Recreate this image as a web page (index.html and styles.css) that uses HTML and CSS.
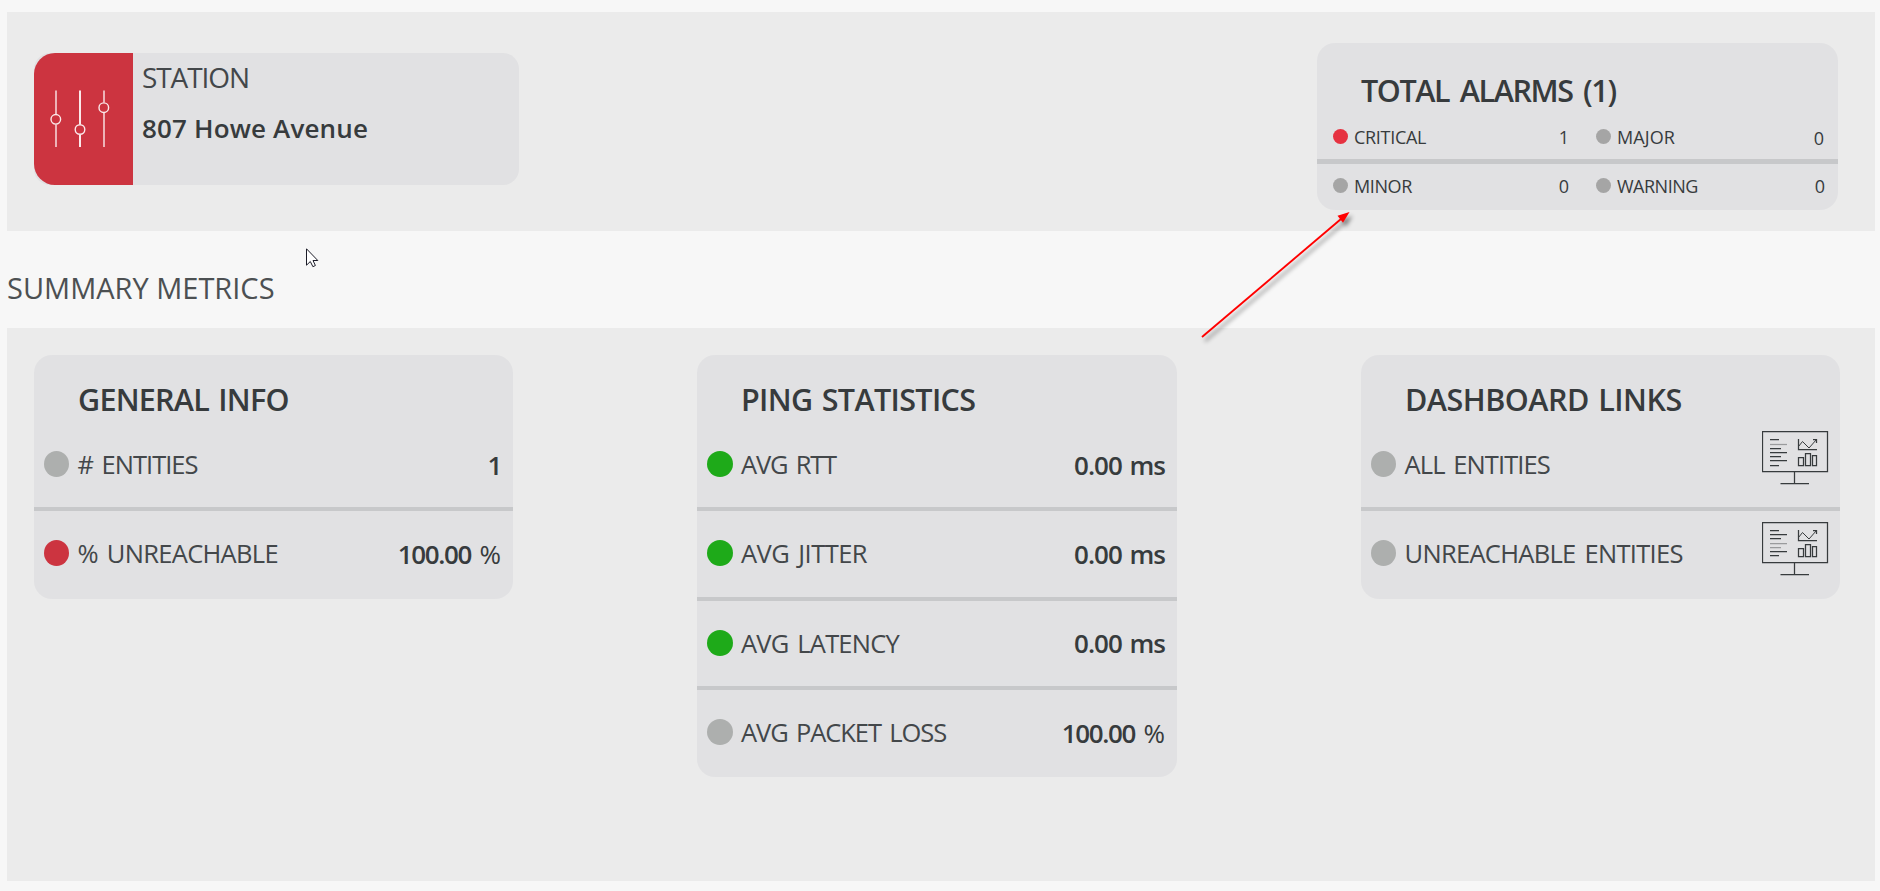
FILE: index.html
```html
<!DOCTYPE html>
<html lang="en">
<head>
<meta charset="utf-8">
<title>Station overview</title>
<link rel="stylesheet" href="styles.css">
</head>
<body>
<svg class="defs" width="0" height="0" aria-hidden="true">
  <symbol id="monitor" viewBox="0 0 67 54">
    <path d="M.5 .5h65v40H.5zM32.5 41v11M18.5 52.5H47"/>
    <path d="M36.5 8v10.5H55"/>
    <path stroke-width="1" d="M36.5 15.5l4-5 6.5 6.500 7.500-8.500"/>
    <path d="M51 8.500h3.500V12"/>
    <path d="M36.500 26.500h5v8h-5zM43.500 22.500h5v12h-5zM50.500 24.500h4v10h-4z"/>
  </symbol>
</svg>

<header class="panel top">
  <section class="station">
    <div class="station-icon">
      <svg width="60" height="58" viewBox="0 0 60 58">
        <path d="M6 .5v24M6 34.500V57M54 .5v12M54 23v34"/>
        <path class="thick" d="M30 .5v34M30 45v12"/>
        <circle cx="5.800" cy="29.300" r="4.800"/><circle cx="30" cy="39.500" r="4.800"/><circle cx="53.800" cy="17.700" r="4.800"/>
      </svg>
    </div>
    <div class="station-text">
      <div class="station-label">STATION</div>
      <div class="station-name">807 Howe Avenue</div>
    </div>
  </section>

  <section class="alarms">
    <h2 class="alarms-title">TOTAL ALARMS (1)</h2>
    <div class="alarm-row">
      <div class="alarm"><i class="sdot critical"></i><span class="al-critical">CRITICAL</span><b>1</b></div>
      <div class="alarm"><i class="sdot"></i><span class="al-major">MAJOR</span><b class="low">0</b></div>
    </div>
    <div class="alarm-row second">
      <div class="alarm"><i class="sdot"></i><span class="al-minor">MINOR</span><b>0</b></div>
      <div class="alarm"><i class="sdot"></i><span class="al-warning">WARNING</span><b>0</b></div>
    </div>
  </section>
</header>

<h1 class="summary">SUMMARY METRICS</h1>

<main class="panel metrics">
  <section class="card narrow">
    <h2 class="t-general">GENERAL INFO</h2>
    <div class="row"><i class="dot"></i><span class="l-entities"># ENTITIES</span><b class="val">1</b></div>
    <div class="row"><i class="dot red"></i><span class="l-unreach">% UNREACHABLE</span><b class="val">100.00<em>%</em></b></div>
  </section>

  <section class="card">
    <h2 class="t-ping">PING STATISTICS</h2>
    <div class="row"><i class="dot green"></i><span class="l-rtt">AVG RTT</span><b class="val ms">0.00 ms</b></div>
    <div class="row"><i class="dot green"></i><span class="l-jitter">AVG JITTER</span><b class="val ms">0.00 ms</b></div>
    <div class="row"><i class="dot green"></i><span class="l-latency">AVG LATENCY</span><b class="val ms">0.00 ms</b></div>
    <div class="row"><i class="dot"></i><span class="l-loss">AVG PACKET LOSS</span><b class="val">100.00<em>%</em></b></div>
  </section>

  <section class="card narrow">
    <h2 class="t-links">DASHBOARD LINKS</h2>
    <div class="row"><i class="dot"></i><span class="l-all">ALL ENTITIES</span>
      <svg class="monitor" width="67" height="54" viewBox="0 0 67 54"><use href="#monitor"/><path d="M8 8.500h9M8 17.500h11M8 21.500h17M8 25.500h11M8 29.500h17M8 34.500h9"/><path class="faint" d="M8 13.500h17"/></svg>
    </div>
    <div class="row"><i class="dot"></i><span class="l-unreach-ent">UNREACHABLE ENTITIES</span>
      <svg class="monitor" width="67" height="54" viewBox="0 0 67 54"><use href="#monitor"/><path d="M8 8.500h9M8 12.500h17M8 16.500h11M8 29.500h17M8 33.500h9"/><path class="faint" d="M8 21.500h17M8 25.500h11"/></svg>
    </div>
  </section>
</main>

<svg class="arrow" width="170" height="150" viewBox="1190 200 170 150">
  <path d="M1202 337L1341 219" stroke="#f00" stroke-width="1.900" fill="none"/>
  <path d="M1349.500 212L1337.500 215.800L1343 222.800z" fill="#f00"/>
</svg>
<svg class="cursor" width="13" height="20" viewBox="0 0 13 20">
  <path d="M.5 .8V17.200L4.300 13.500L6.900 18.700L9.400 17.500L7 12.500H11.800z"/>
</svg>
</body>
</html>
```

FILE: styles.css
```css
* { box-sizing: border-box; }

body {
  margin: 0;
  padding: 12px 5px 0 7px;
  background: #f7f7f7;
  color: #373b3d;
  font-family: "Open Sans", "Noto Sans", sans-serif;
}

h1, h2 { margin: 0; }
i, em { font-style: normal; }
svg { display: block; }
.defs { position: absolute; }

.panel {
  display: flex;
  justify-content: space-between;
  align-items: flex-start;
  background: #ebebeb;
}

/* Station header */
.top { height: 219px; padding: 31px 37px 0 27px; }

.station {
  display: flex;
  width: 485px;
  height: 132px;
  margin-top: 10px;
  border-radius: 16px;
  background: #e1e1e3;
}
.station-icon {
  width: 99px;
  padding: 37px 0 0 16px;
  border-radius: 21px 0 0 21px;
  background: #cc3440;
}
.station-icon svg { fill: none; stroke: #fbe9ea; stroke-width: 1.4; }
.station-icon .thick { stroke-width: 2; }
.station-text { padding: 7px 0 0 9px; }
.station-label { color: #43474a; font-size: 28px; font-weight: 400; line-height: 34px; letter-spacing: -1.1px; }
.station-name { margin-top: 14px; font-size: 26px; font-weight: 600; line-height: 40px; letter-spacing: .15px; }

.alarms {
  width: 521px;
  height: 167px;
  border-radius: 18px;
  background: #e1e1e3;
}
.alarms-title {
  padding: 23px 0 0 44px;
  font-size: 30.500px;
  font-weight: 600;
  line-height: 48px;
  letter-spacing: -1.4px;
  word-spacing: 4px;
}
.alarm-row { display: flex; height: 45px; }
.alarm-row.second { height: 49px; padding-bottom: 1px; border-top: 5px solid #c7c8ca; }
.alarm {
  display: flex;
  align-items: center;
  width: 262px;
  padding: 1px 10px 0 16px;
  font-size: 18px;
}
.alarm + .alarm { width: 259px; padding: 1px 13px 0 17px; }
.alarm b { margin-left: auto; font-weight: 400; }
.alarm .low { padding: 2px 1px 0 0; }
.sdot { width: 15px; height: 15px; margin: 0 6px 2px 0; border-radius: 50%; background: #a5a5a5; }
.sdot.critical { background: #e63241; }
.al-critical { letter-spacing: -.3px; }
.al-major { letter-spacing: .1px; }
.al-minor { letter-spacing: -.4px; }
.al-warning { letter-spacing: -.5px; }

.summary {
  height: 97px;
  padding: 16px 0 0;
  font-size: 29px;
  font-weight: 400;
  line-height: 81px;
  color: #4c5052;
}

/* Metric cards */
.metrics { height: 553px; padding: 27px 35px 0 27px; }
.card { width: 480px; padding-bottom: 1px; border-radius: 18px; background: #e1e1e3; }
.card.narrow { width: 479px; padding-bottom: 2px; }
.card h2 {
  height: 67px;
  padding: 20px 0 0 44px;
  font-size: 30.500px;
  font-weight: 600;
  line-height: 49px;
  word-spacing: 2px;
}
.row {
  display: flex;
  align-items: center;
  height: 85px;
  padding: 0 12px 1px 10px;
  color: #43474a;
  font-size: 25.500px;
  word-spacing: 3px;
}
.row + .row { height: 89.500px; border-top: 4px solid #c7c8ca; }
.dot { width: 26px; height: 26px; margin-right: 8px; border-radius: 50%; background: #adafae; }
.narrow .dot { width: 25px; margin-right: 8.500px; }
.dot.red { background: #cc3440; }
.dot.green { background: #1eaa19; }
.val { margin: 1px 0 0 auto; color: #373b3d; font-size: 26px; font-weight: 600; letter-spacing: -1.35px; }
.val.ms { letter-spacing: -1px; word-spacing: 2px; }
.val em { margin-left: 8.500px; font-weight: 400; letter-spacing: 0; }

.t-general { letter-spacing: -.75px; }
.t-ping { letter-spacing: -.65px; }
.t-links { letter-spacing: -.5px; }
.l-entities { letter-spacing: -1px; }
.l-unreach { letter-spacing: -.7px; }
.l-rtt { letter-spacing: -1.2px; }
.l-jitter { letter-spacing: -.55px; }
.l-latency { letter-spacing: -.8px; }
.l-loss { letter-spacing: -1.1px; }
.l-all { letter-spacing: -.9px; }
.l-unreach-ent { letter-spacing: -.7px; }

.monitor { margin: 0 -1px 12px auto; fill: none; stroke: #373b3d; stroke-width: 1.25; }
.row + .row .monitor { margin-bottom: 8px; }
.monitor .faint { stroke: #9a9b9d; }

/* Callout arrow and pointer lie over the page */
.arrow { position: absolute; left: 1190px; top: 200px; filter: drop-shadow(3px 4px 2px rgba(0, 0, 0, .45)); }
.cursor { position: absolute; left: 306px; top: 248px; fill: #fff; stroke: #1c1c28; stroke-width: 1; }
```
